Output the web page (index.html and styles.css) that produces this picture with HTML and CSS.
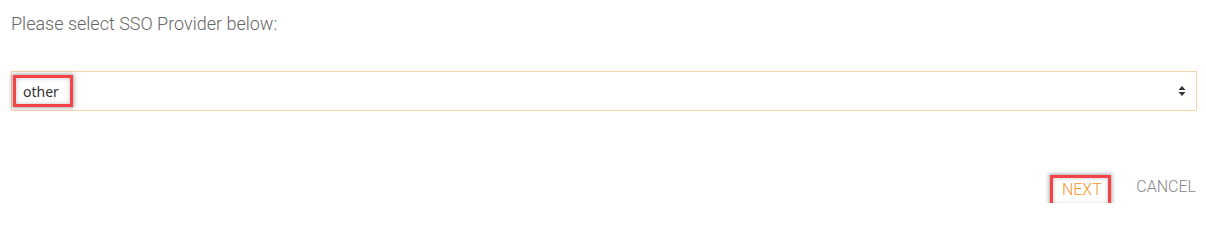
FILE: index.html
```html
<!DOCTYPE html>
<html>
<head>
<meta charset="utf-8">
<link rel="stylesheet" href="styles.css">
</head>
<body>
<div class="page">
  <p class="prompt">Please select SSO Provider below:</p>
  <div class="select">
    <span class="value mark">other</span>
    <svg class="arrows" width="8" height="12" viewBox="0 0 8 12"><path d="M4 1 L7.5 5 L0.5 5 Z M4 11 L7.5 7 L0.5 7 Z" fill="#333"/></svg>
  </div>
  <div class="actions">
    <span class="btn next mark">NEXT</span>
    <span class="btn cancel">CANCEL</span>
  </div>
</div>
</body>
</html>
```
FILE: styles.css
```css
html, body { margin: 0; padding: 0; background: #fff; }
body { width: 1206px; height: 203px; overflow: hidden; }
.page {
  padding: 0 9px 0 11px;
  font-family: Roboto, "Liberation Sans", sans-serif;
}
.prompt {
  margin: 0;
  padding-top: 13px;
  height: 71px;
  box-sizing: border-box;
  font-size: 18px;
  font-weight: 300;
  color: #666;
  line-height: 22px;
}
.select {
  height: 40px;
  box-sizing: border-box;
  border: 1px solid #f7d3a8;
  display: flex;
  align-items: center;
  justify-content: space-between;
  padding: 0 10px 0 1px;
}
.mark {
  border: 3px solid #f44246;
  box-shadow: 0 0 4px 1px rgba(0,0,0,0.35), inset 0 0 4px rgba(0,0,0,0.25);
  box-sizing: border-box;
}
.value {
  width: 60px;
  height: 32px;
  display: flex;
  align-items: center;
  padding-left: 7px;
  font-family: "Noto Sans", "Open Sans", sans-serif;
  font-size: 14px;
  color: #333;
}
.actions {
  display: flex;
  justify-content: flex-end;
  align-items: flex-start;
  margin-top: 64px;
  padding-right: 1px;
  gap: 25px;
}
.btn {
  font-size: 16px;
  font-weight: 300;
  line-height: 20px;
}
.next {
  width: 61px;
  height: 32px;
  color: #f5962a;
  text-align: center;
  padding-top: 2px;
  padding-left: 2px;
}
.cancel {
  color: #888;
  padding-top: 2px;
}
```
